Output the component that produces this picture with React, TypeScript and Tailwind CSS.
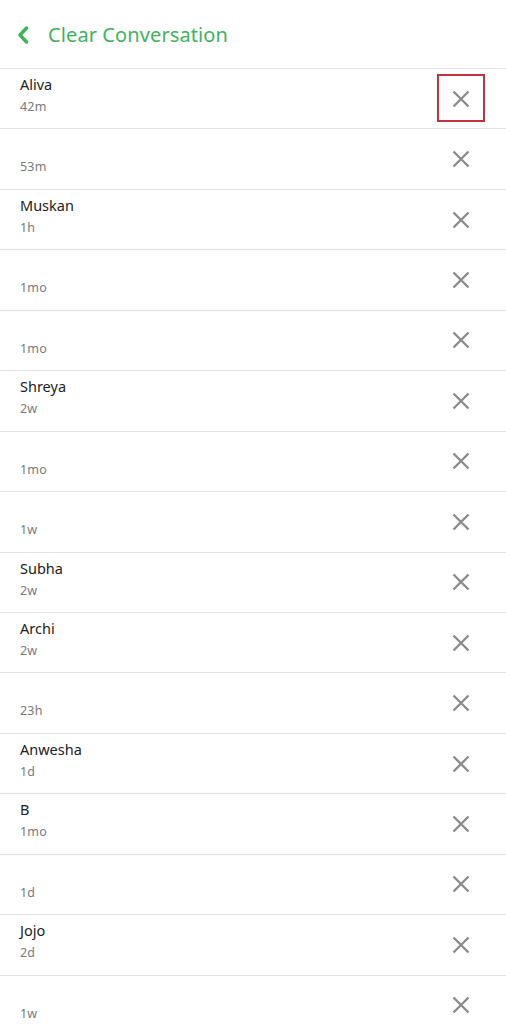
import React from "react";

interface Chat {
  name: string;
  time: string;
}

const chats: Chat[] = [
  { name: "Aliva", time: "42m" },
  { name: "", time: "53m" },
  { name: "Muskan", time: "1h" },
  { name: "", time: "1mo" },
  { name: "", time: "1mo" },
  { name: "Shreya", time: "2w" },
  { name: "", time: "1mo" },
  { name: "", time: "1w" },
  { name: "Subha", time: "2w" },
  { name: "Archi", time: "2w" },
  { name: "", time: "23h" },
  { name: "Anwesha", time: "1d" },
  { name: "B", time: "1mo" },
  { name: "", time: "1d" },
  { name: "Jojo", time: "2d" },
  { name: "", time: "1w" },
];

const CloseIcon = () => (
  <svg width="18" height="18" viewBox="0 0 18 18" fill="none">
    <path
      d="M1.5 1.5L16.5 16.5M16.5 1.5L1.5 16.5"
      stroke="#8c8c8c"
      strokeWidth="2.4"
      strokeLinecap="butt"
    />
  </svg>
);

const App: React.FC = () => {
  return (
    <div
      className="w-[506px] h-[1024px] overflow-hidden bg-white"
      style={{ fontFamily: "'Noto Sans', 'Liberation Sans', sans-serif" }}
    >
      <div className="h-[68px] flex items-center pl-[17px] pt-[2px]">
        <svg width="12" height="18" viewBox="0 0 12 18" fill="none">
          <path
            d="M9.5 2L3 9L9.5 16"
            stroke="#3bb556"
            strokeWidth="3.4"
            strokeLinecap="round"
            strokeLinejoin="round"
          />
        </svg>
        <span className="ml-[19px] text-[20px] text-[#3fb25e] tracking-[0.1px] leading-none">
          Clear Conversation
        </span>
      </div>
      <ul>
        {chats.map((chat, i) => (
          <li
            key={i}
            className="relative h-[60.45px] border-t-[1.5px] border-[#e2e2e2] flex items-start justify-between pl-[20px] pr-[36px]"
          >
            <div className="pt-[5px]">
              <div className="text-[14.5px] leading-[20px] text-[#222] h-[20px]">
                {chat.name}
              </div>
              <div className="mt-[5px] text-[12.5px] leading-[16px] text-[#7a7a7a] tracking-[0.2px]">
                {chat.time}
              </div>
            </div>
            <div className="self-center">
              <CloseIcon />
            </div>
            {i === 0 && (
              <div className="absolute left-[437px] top-[5px] w-[48px] h-[48px] border-2 border-[#c9303e]" />
            )}
          </li>
        ))}
      </ul>
    </div>
  );
};

export default App;
